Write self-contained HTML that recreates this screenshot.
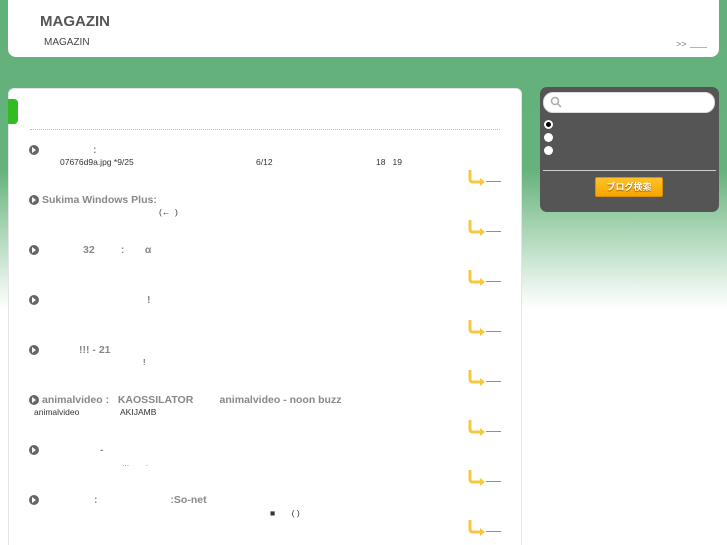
<!DOCTYPE html>
<html style="background:#fff"><head><meta charset="utf-8"><style>
*{margin:0;padding:0;box-sizing:border-box}
html,body{width:727px;height:545px;overflow:hidden}
body{position:relative;font-family:"Liberation Sans","Noto Sans CJK JP",sans-serif;background:#fff}
.bg{position:absolute;left:0;top:0;width:727px;height:545px;background:linear-gradient(to bottom,#62b07a 0px,#66b27c 170px,#a9d5b5 230px,#e6f3ea 285px,#fff 310px,#fff 545px)}
.hdr{position:absolute;left:8px;top:-10px;width:711px;height:67px;background:#fff;border-radius:8px}
.main{position:absolute;left:8px;top:88px;width:514px;height:470px;background:#fff;border-radius:6px;border:1px solid #e4e4e4}
.tab{position:absolute;left:8px;top:99px;width:10px;height:25px;background:#33bb22;border-radius:0 4px 4px 0}
.line{position:absolute;left:30px;top:129px;width:470px;border-top:1px dotted #9cc9dc}
.side{position:absolute;left:540px;top:87px;width:179px;height:125px;background:#555;border-radius:7px}
.t{position:absolute;left:42px;font-size:10.5px;font-weight:bold;color:#888}
.d{position:absolute;font-size:8.5px;color:#333}
.ic{position:absolute;left:29px;width:10px;height:10px;border-radius:50%;background:#666}
.ic:after{content:"";position:absolute;left:3px;top:2px;border-left:4px solid #fff;border-top:3px solid transparent;border-bottom:3px solid transparent}
.ar{position:absolute;left:467px}
.ul{position:absolute;left:486px;width:15px;border-top:1px solid #4aa6e0}
</style></head><body>
<div class="bg"></div>
<div class="hdr"></div>
<div style="position:absolute;left:40px;top:13px;font-size:15px;font-weight:bold;color:#555">MAGAZIN</div>
<div style="position:absolute;left:44px;top:37px;font-size:10px;color:#444">MAGAZIN</div>
<div style="position:absolute;left:676px;top:39px;font-size:9px;color:#777">&gt;&gt;</div>
<div style="position:absolute;left:690px;top:47px;width:17px;border-top:1px solid #7cc4ea"></div>
<div class="main"></div><div class="tab"></div><div class="line"></div>

<div class="ic" style="top:145px"></div><div class="t" style="top:144px;left:93px">:</div>
<div class="d" style="left:60px;top:157px">07676d9a.jpg *9/25</div><div class="d" style="left:256px;top:157px">6/12</div><div class="d" style="left:376px;top:157px">18 &nbsp; 19</div>

<div class="ic" style="top:195px"></div><div class="t" style="top:194px">Sukima Windows Plus:</div>
<div class="d" style="left:159px;top:207px">(← &nbsp;)</div>

<div class="ic" style="top:245px"></div><div class="t" style="top:244px;left:83px">32 &nbsp; &nbsp; &nbsp; &nbsp; : &nbsp; &nbsp; &nbsp; α</div>
<div class="ic" style="top:295px"></div><div class="t" style="top:294px;left:147px">!</div>
<div class="ic" style="top:345px"></div><div class="t" style="top:344px;left:79px">!!! - 21</div>
<div class="d" style="left:143px;top:357px">!</div>
<div class="ic" style="top:395px"></div><div class="t" style="top:394px">animalvideo : &nbsp; KAOSSILATOR &nbsp; &nbsp; &nbsp; &nbsp; animalvideo - noon buzz</div>
<div class="d" style="left:34px;top:407px">animalvideo</div><div class="d" style="left:120px;top:407px">AKIJAMB</div>
<div class="ic" style="top:445px"></div><div class="t" style="top:444px;left:100px">-</div>
<div class="d" style="left:122px;top:458px;color:#888">... &nbsp; &nbsp; &nbsp; .</div>
<div class="ic" style="top:495px"></div><div class="t" style="top:494px;left:94px">: &nbsp; &nbsp; &nbsp; &nbsp; &nbsp; &nbsp; &nbsp; &nbsp; &nbsp; &nbsp; &nbsp; &nbsp; :So-net</div>
<div class="d" style="left:270px;top:508px">■ &nbsp; &nbsp; &nbsp; ( )</div>

<svg width="0" height="0" style="position:absolute"><defs><g id="a"><path d="M3 1 V9 Q3 12 6 12 H14" fill="none" stroke="#f5c842" stroke-width="3" stroke-linecap="round"/><path d="M13 8 L18 12 L13 16 Z" fill="#f5c842"/></g></defs></svg>
<svg class="ar" style="top:170px" width="20" height="18"><use href="#a"/></svg><div class="ul" style="top:181px"></div>
<svg class="ar" style="top:220px" width="20" height="18"><use href="#a"/></svg><div class="ul" style="top:231px"></div>
<svg class="ar" style="top:270px" width="20" height="18"><use href="#a"/></svg><div class="ul" style="top:281px"></div>
<svg class="ar" style="top:320px" width="20" height="18"><use href="#a"/></svg><div class="ul" style="top:331px"></div>
<svg class="ar" style="top:370px" width="20" height="18"><use href="#a"/></svg><div class="ul" style="top:381px"></div>
<svg class="ar" style="top:420px" width="20" height="18"><use href="#a"/></svg><div class="ul" style="top:431px"></div>
<svg class="ar" style="top:470px" width="20" height="18"><use href="#a"/></svg><div class="ul" style="top:481px"></div>
<svg class="ar" style="top:520px" width="20" height="18"><use href="#a"/></svg><div class="ul" style="top:531px"></div>

<div class="side"></div>
<div style="position:absolute;left:543px;top:92px;width:172px;height:21px;background:#fff;border-radius:10px;border:1px solid #ddd"></div>
<svg style="position:absolute;left:550px;top:96px" width="12" height="12"><circle cx="5" cy="5" r="3.5" fill="none" stroke="#aaa" stroke-width="1.5"/><path d="M7.5 7.5 L11 11" stroke="#aaa" stroke-width="1.5"/></svg>
<div style="position:absolute;left:544px;top:120px;width:9px;height:9px;border-radius:50%;background:#fff"><div style="margin:2px;width:5px;height:5px;border-radius:50%;background:#000"></div></div>
<div style="position:absolute;left:544px;top:133px;width:9px;height:9px;border-radius:50%;background:#fff"></div>
<div style="position:absolute;left:544px;top:146px;width:9px;height:9px;border-radius:50%;background:#fff"></div>
<div style="position:absolute;left:543px;top:170px;width:173px;border-top:1px solid #ccc"></div>
<div style="position:absolute;left:595px;top:177px;width:68px;height:20px;background:linear-gradient(#ffc22a,#f6a500);border:1px solid #d99000;border-radius:2px;color:#fff;font-size:9px;font-weight:bold;text-align:center;line-height:18px;text-shadow:0 1px 1px #8a5a00">ブログ検索</div>
</body></html>
